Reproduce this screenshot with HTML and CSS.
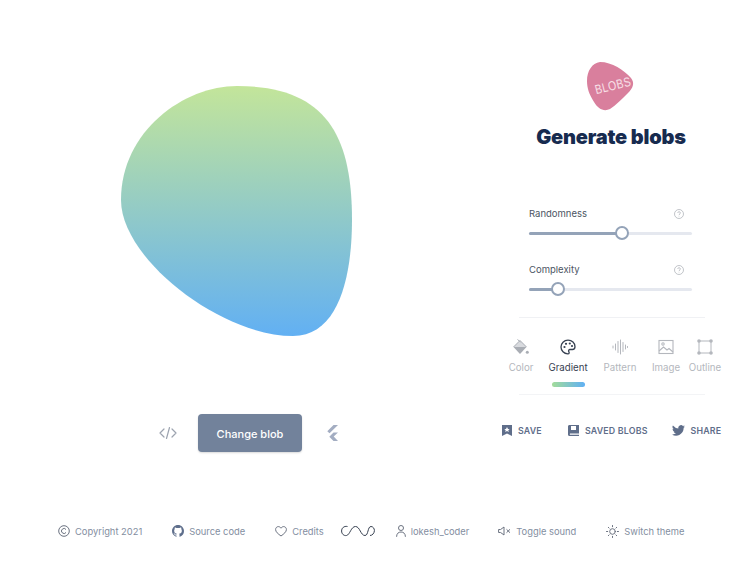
FILE: index.html
```html
<!DOCTYPE html>
<html lang="en">
<head>
<meta charset="utf-8">
<title>Blobs</title>
<link rel="stylesheet" href="styles.css">
</head>
<body>
<div class="page">
  <main class="main">
    <section class="stage">
      <svg class="blob" width="231" height="250" viewBox="0 0 231 250">
        <defs><linearGradient id="bg" x1="0" y1="0" x2="0" y2="1"><stop offset="0" stop-color="#c3e59a"/><stop offset="1" stop-color="#62b0f3"/></linearGradient></defs>
        <path fill="url(#bg)" d="M116 0C205 0 231 49 231 134C231 187 219 250 172 250C100 250 0 173 0 114C0 45 63 0 116 0Z"/>
      </svg>
      <div class="actions">
        <svg class="ico-code" width="18" height="14" viewBox="0 0 18 14" fill="none" stroke="#9ca3af" stroke-width="1.2" stroke-linecap="round" stroke-linejoin="round"><path d="M5 3 1 7l4 4M13 3l4 4-4 4M10.500 1.500 7.500 12.500"/></svg>
        <button class="change">Change blob</button>
        <svg class="ico-flutter" width="14" height="16" viewBox="0 0 14 16"><path fill="#a3adc2" d="M8.500 0H13L4.500 8.300 2.300 6.200 8.500 0ZM8.500 7.400H13L8.700 11.600 13 16H8.500L4.300 11.700 8.500 7.400Z"/></svg>
      </div>
    </section>
    <aside class="panel">
      <div class="logo">
        <svg width="50" height="50" viewBox="0 0 50 50"><path fill="#d97f9d" d="M14 0C26 0 38 8 45 16C49 21 47 26 42 31C36 37 30 43 24 47C18 50 12 47 8 40C3 32 1 26 1 19C1 9 6 1 14 0Z"/></svg>
        <span class="logo-text">BLOBS</span>
      </div>
      <h1 class="title">Generate blobs</h1>
      <div class="sliders">
        <div class="slider">
          <div class="slider-head"><span>Randomness</span><svg width="10" height="10" viewBox="0 0 10 10" fill="none" stroke="#a8acb3" stroke-width=".7"><circle cx="5" cy="5" r="4.500"/><path d="M3.700 3.900C3.700 2.300 6.400 2.300 6.400 3.900C6.400 5 5 5 5 6.200M5 7.200v.4"/></svg></div>
          <div class="track"><div class="fill fill-a"></div><div class="thumb"></div></div>
        </div>
        <div class="slider">
          <div class="slider-head"><span>Complexity</span><svg width="10" height="10" viewBox="0 0 10 10" fill="none" stroke="#a8acb3" stroke-width=".7"><circle cx="5" cy="5" r="4.500"/><path d="M3.700 3.900C3.700 2.300 6.400 2.300 6.400 3.900C6.400 5 5 5 5 6.200M5 7.200v.4"/></svg></div>
          <div class="track"><div class="fill fill-b"></div><div class="thumb"></div></div>
        </div>
      </div>
      <div class="tabs">
        <div class="tab tab-color">
          <svg width="16" height="16" viewBox="0 0 16 16"><path fill="#d8dade" d="M.5 8 7 1.500 13.500 8Z"/><path fill="#a9adb4" d="M.5 8H13.500L7 15Z"/><path stroke="#a9adb4" fill="none" d="M4.500 .5 7.500 3M.5 8 7 1.500 13.500 8"/><circle cx="14.300" cy="13.300" r="1.500" fill="#a9adb4"/></svg>
          <span>Color</span>
        </div>
        <div class="tab tab-grad active">
          <svg width="16" height="16" viewBox="0 0 16 16" fill="none"><path stroke="#374151" stroke-width="1.300" d="M8 1.200C4 1.200 1 4.200 1 8C1 11.800 4 14.800 7.800 14.800C9.500 14.800 9.300 13.500 8.800 12.700C8.200 11.700 8.800 10.500 10 10.500H12.500C14 10.500 15 9.300 15 7.700C15 4 12 1.200 8 1.200Z"/><circle cx="4.500" cy="8" r="1.100" fill="#374151"/><circle cx="6" cy="4.800" r="1.100" fill="#374151"/><circle cx="9.800" cy="4.500" r="1.100" fill="#374151"/><circle cx="12" cy="7" r="1.100" fill="#374151"/></svg>
          <span>Gradient</span>
          <i class="tab-bar"></i>
        </div>
        <div class="tab tab-pat">
          <svg width="16" height="16" viewBox="0 0 16 16" fill="none" stroke="#b4b7bd" stroke-width="1" stroke-linecap="round"><path d="M1 7v2M3.500 5v6M6 2.500v11M8.500 1v14M11 3.500v9M13.500 6v4M15.500 7.500v1"/></svg>
          <span>Pattern</span>
        </div>
        <div class="tab tab-img">
          <svg width="16" height="16" viewBox="0 0 16 16" fill="none" stroke="#b4b7bd" stroke-width="1.100"><rect x="1" y="1.500" width="14" height="13"/><path d="M1 12 5.500 8 9 11 11 9.500 15 13"/><circle cx="5" cy="5" r="1.200"/></svg>
          <span>Image</span>
        </div>
        <div class="tab tab-out">
          <svg width="16" height="16" viewBox="0 0 16 16" fill="none" stroke="#b4b7bd" stroke-width="1"><rect x="2" y="2" width="12" height="12"/><g fill="#b4b7bd" stroke="none"><circle cx="2" cy="2" r="1.800"/><circle cx="14" cy="2" r="1.800"/><circle cx="2" cy="14" r="1.800"/><circle cx="14" cy="14" r="1.800"/></g></svg>
          <span>Outline</span>
        </div>
      </div>
      <div class="saves">
        <a class="save"><svg width="10" height="11" viewBox="0 0 10 11"><path fill="#5f6e8a" fill-rule="evenodd" d="M0 0H10V11L5 8.500 0 11ZM5 2 4 4H2.300L3.700 5.300 3.200 7 5 6 6.800 7 6.300 5.300 7.700 4H6Z"/></svg>SAVE</a>
        <a class="save saved"><svg width="11" height="11" viewBox="0 0 11 11"><path fill="#5f6e8a" fill-rule="evenodd" d="M1.500 0H11V8.500H2A1 1 0 0 0 2 9.800H11V11H1.500C.6 11 0 10.400 0 9.500V1.500C0 .6.6 0 1.500 0ZM3 1V5H8V1Z"/></svg>SAVED BLOBS</a>
        <a class="save"><svg width="13" height="11" viewBox="0 0 24 20"><path fill="#5f6e8a" d="M24 2.400a9.800 9.800 0 0 1-2.800.8 4.900 4.900 0 0 0 2.100-2.700 9.800 9.800 0 0 1-3.100 1.200 4.900 4.900 0 0 0-8.400 4.500A14 14 0 0 1 1.700.9a4.900 4.900 0 0 0 1.500 6.600 4.900 4.900 0 0 1-2.200-.6v.1a4.900 4.900 0 0 0 3.900 4.800 4.900 4.900 0 0 1-2.200.1 4.900 4.900 0 0 0 4.600 3.400A9.900 9.900 0 0 1 0 17.300 14 14 0 0 0 7.500 19.500c9.100 0 14-7.500 14-14v-.6A10 10 0 0 0 24 2.400Z"/></svg>SHARE</a>
      </div>
    </aside>
  </main>
  <footer class="footer">
    <a class="f-copy"><svg width="12" height="12" viewBox="0 0 12 12" fill="none" stroke="#6b7280" stroke-width="1"><circle cx="6" cy="6" r="5.300"/><path d="M8 4.500A2.500 2.500 0 1 0 8 7.500"/></svg>Copyright 2021</a>
    <a class="f-src"><svg width="12" height="12" viewBox="0 0 16 16"><path fill="#5f6f8c" d="M8 0C3.580 0 0 3.580 0 8c0 3.540 2.290 6.530 5.470 7.590.4.070.55-.17.550-.38v-1.340c-2.230.48-2.700-1.070-2.700-1.070-.36-.92-.89-1.170-.89-1.170-.73-.5.060-.49.060-.49.800.06 1.220.82 1.220.82.710 1.220 1.870.87 2.330.66.070-.52.280-.87.510-1.070-1.780-.2-3.640-.89-3.640-3.950 0-.87.310-1.590.82-2.150-.08-.2-.36-1.020.08-2.120 0 0 .67-.21 2.200.82a7.600 7.600 0 0 1 4 0c1.530-1.040 2.200-.82 2.200-.82.440 1.100.16 1.920.08 2.120.51.560.82 1.270.82 2.150 0 3.070-1.870 3.750-3.650 3.950.29.250.54.730.54 1.480v2.190c0 .21.150.46.550.38A8 8 0 0 0 16 8c0-4.420-3.580-8-8-8Z"/></svg>Source code</a>
    <a class="f-cred"><svg width="12" height="11" viewBox="0 0 12 11" fill="none" stroke="#6b7280" stroke-width="1"><path d="M6 10C3 7.800.6 5.900.6 3.500C.6 1.800 1.900.6 3.300.6C4.400.6 5.400 1.200 6 2.200C6.600 1.200 7.600.6 8.700.6C10.100.6 11.400 1.800 11.400 3.500C11.400 5.900 9 7.800 6 10Z"/></svg>Credits</a>
    <svg class="f-wave" width="34" height="12" viewBox="0 0 34 12" fill="none" stroke="#374151" stroke-width="1"><path d="M6.500 1.500C3 .8.600 3 .6 6C.6 9 3 11 5.500 10.500C9 9.800 10 1.500 14.500 1.500C19 1.500 19.500 10.500 24 10.500C27.500 10.500 26.500 1.500 30 1.500C32 1.500 33.400 3.500 33.400 5.500C33.400 8 31.500 10.500 29 10.500"/></svg>
    <a class="f-user"><svg width="10" height="12" viewBox="0 0 10 12" fill="none" stroke="#6b7280" stroke-width="1"><circle cx="5" cy="3" r="2.500"/><path d="M.6 11.800C.6 8.500 2.500 7 5 7C7.500 7 9.400 8.500 9.400 11.800"/></svg>lokesh_coder</a>
    <a class="f-sound"><svg width="13" height="10" viewBox="0 0 13 10" fill="none" stroke="#6b7280" stroke-width="1"><path d="M.6 3.500V6.500H2.600L6 9V1L2.600 3.500ZM8.500 3.300 12 6.700M12 3.300 8.500 6.700"/></svg>Toggle sound</a>
    <a class="f-theme"><svg width="13" height="13" viewBox="0 0 13 13" fill="none" stroke="#6b7280" stroke-width="1" stroke-linecap="round"><circle cx="6.500" cy="6.500" r="2.800"/><path d="M6.500.5v1.200M6.500 11.300v1.200M.5 6.500h1.200M11.300 6.500h1.200M2.300 2.300l.8.800M9.900 9.900l.8.800M2.300 10.700l.8-.8M9.900 3.100l.8-.8"/></svg>Switch theme</a>
  </footer>
</div>
</body>
</html>
```
FILE: styles.css
```css
* { box-sizing: border-box; }
html, body { margin: 0; padding: 0; background: #fff; }
body { font-family: Inter, "Noto Sans", sans-serif; }
.page { width: 740px; height: 561px; overflow: hidden; padding-top: 62px; display: flex; flex-direction: column; }
.main { display: flex; height: 400px; }
.stage { width: 500px; display: flex; flex-direction: column; }
.blob { display: block; margin: 24px 0 0 121px; }
.actions { display: flex; align-items: center; margin: 78px 0 0 159px; }
.ico-code { flex: none; }
.change { width: 104px; height: 38px; margin: 0 23px 0 21px; border: 0; border-radius: 4px; background: #72829b; color: #fff; font: 500 11px Inter, sans-serif; box-shadow: 0 1px 2px rgba(0,0,0,.15); padding: 1px 0 0; }
.ico-flutter { flex: none; }
.panel { width: 240px; display: flex; flex-direction: column; }
.logo { position: relative; width: 50px; height: 50px; margin-left: 86px; }
.logo svg { display: block; }
.logo-text { position: absolute; left: 4px; top: 16px; color: #f8e0e8; font: 400 13px "Liberation Sans", sans-serif; transform: rotate(-14deg) scaleX(.8); letter-spacing: .5px; }
.title { margin: 13px 0 0; width: 222px; text-align: center; font: 900 20px/24px Inter, sans-serif; letter-spacing: -.2px; color: #172b4f; }
.sliders { height: 169px; margin-left: 19px; width: 186px; padding: 56px 13px 0 10px; border-bottom: 1px solid #f0f1f4; }
.slider { height: 56px; }
.slider-head { display: flex; justify-content: space-between; align-items: center; height: 16px; font-size: 9.500px; color: #4b5563; }
.slider-head svg { margin: 2px 8px 0 0; }
.track { position: relative; height: 3px; margin-top: 11px; border-radius: 2px; background: #e5e8ef; }
.fill { position: absolute; left: 0; top: 0; height: 3px; border-radius: 2px; background: #94a3b8; }
.fill-a { width: 93px; }
.fill-b { width: 29px; }
.thumb { position: absolute; top: -6px; width: 14px; height: 14px; border-radius: 50%; background: #fff; border: 2px solid #94a3b8; }
.fill-a + .thumb { left: 86px; }
.fill-b + .thumb { left: 22px; }
.tabs { position: relative; height: 77px; }
.tabs::after { content: ""; position: absolute; left: 19px; bottom: 0; width: 186px; border-bottom: 1px solid #f3f4f6; }
.tab { position: absolute; top: 21px; display: flex; flex-direction: column; align-items: center; font-size: 9.700px; color: #b4b7bd; width: 50px; }
.tab span { margin-top: 6px; line-height: 14px; }
.tab.active { color: #374151; }
.tab-color { left: -4px; }
.tab-grad { left: 43px; }
.tab-pat { left: 95px; }
.tab-img { left: 141px; }
.tab-out { left: 180px; }
.tab-bar { display: block; width: 33px; height: 5px; margin-top: 7px; border-radius: 3px; background: linear-gradient(90deg, #a3dc9a, #60b0f4); }
.saves { display: flex; align-items: center; margin-top: 30px; }
.save { display: flex; align-items: center; gap: 6px; font-size: 8.800px; font-weight: 600; letter-spacing: .2px; color: #5f6e8a; }
.save:first-child { margin-left: 2px; }
.saved { margin-left: 26px; }
.saved + .save { margin-left: 24px; }
.footer { display: flex; align-items: center; padding-left: 58px; height: 16px; margin-top: 61px; font-size: 9.350px; color: #838e9f; white-space: nowrap; }
.footer a { display: flex; align-items: center; gap: 5px; }
.f-src { margin-left: 30px; }
.f-cred { margin-left: 30px; }
.f-wave { margin-left: 17px; }
.f-user { margin-left: 21px; }
.f-sound { margin-left: 29px; }
.f-theme { margin-left: 30px; }
```
